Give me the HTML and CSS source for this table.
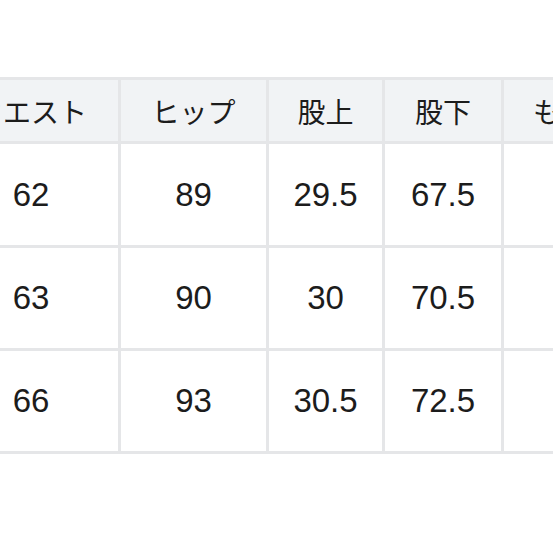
FILE: index.html
```html
<!DOCTYPE html>
<html lang="ja">
<head>
<meta charset="utf-8">
<link rel="stylesheet" href="styles.css">
</head>
<body>
<div class="chart">
  <div class="cell head">ウエスト</div>
  <div class="cell head">ヒップ</div>
  <div class="cell head">股上</div>
  <div class="cell head">股下</div>
  <div class="cell head">もも周り</div>

  <div class="cell num">62</div>
  <div class="cell num">89</div>
  <div class="cell num">29.5</div>
  <div class="cell num">67.5</div>
  <div class="cell num"></div>

  <div class="cell num">63</div>
  <div class="cell num">90</div>
  <div class="cell num">30</div>
  <div class="cell num">70.5</div>
  <div class="cell num"></div>

  <div class="cell num">66</div>
  <div class="cell num">93</div>
  <div class="cell num">30.5</div>
  <div class="cell num">72.5</div>
  <div class="cell num"></div>
</div>
</body>
</html>
```

FILE: styles.css
```css
html, body {
  margin: 0;
  padding: 0;
  background: #ffffff;
  overflow: hidden;
  width: 553px;
  height: 553px;
}

.chart {
  display: grid;
  grid-template-columns: 174px 145px 113px 116px 170px;
  grid-template-rows: 61px 101px 100px 100px;
  gap: 3px;
  padding: 3px;
  background: #e5e6e8;
  margin-top: 77px;
  margin-left: -59px;
  width: max-content;
}

.cell {
  background: #ffffff;
  display: flex;
  align-items: center;
  justify-content: center;
  color: #1c1c1c;
  white-space: nowrap;
}

.head {
  background: #f1f3f5;
  font-family: "Noto Sans CJK JP", "Noto Sans", sans-serif;
  font-size: 28px;
  font-weight: 400;
  padding-top: 1px;
}

.num {
  font-family: "Liberation Sans", Arial, sans-serif;
  font-size: 33px;
}
```
